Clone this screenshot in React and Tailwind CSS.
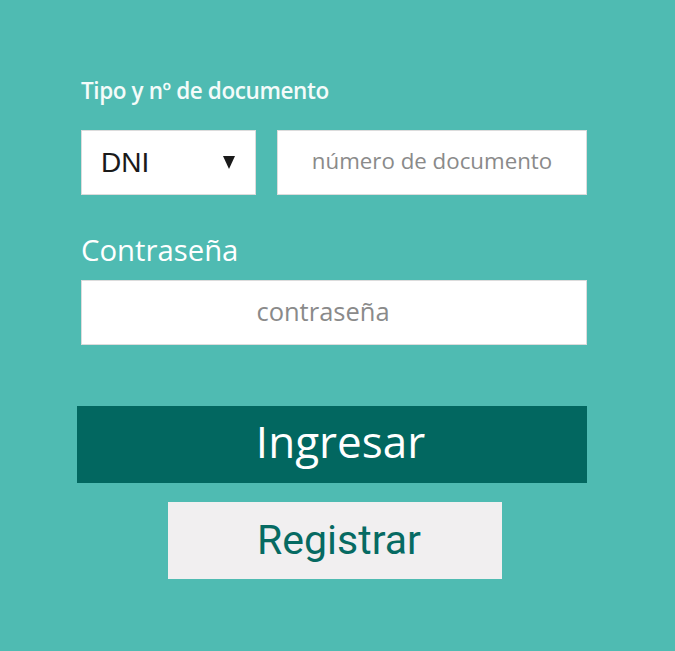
export default function App() {
  return (
    <div className="min-h-[651px] w-full bg-[#4fbbb2] font-['Open_Sans',sans-serif]">
      <div className="ml-[81px] w-[506px] pt-[76px]">
        {/* Tipo y nº de documento */}
        <p className="text-[22.5px] leading-[30px] font-semibold tracking-[-0.4px] text-[#f4fbfa]">
          Tipo y nº de documento
        </p>
        <div className="mt-[24px] flex gap-[21px]">
          <div className="flex h-[65px] w-[175px] items-center justify-between border border-[#dcdcdc] bg-white pl-[19px] pr-[20px]">
            <span className="font-['Liberation_Sans',sans-serif] text-[28px] text-[#1a1a1a]">DNI</span>
            <svg width="12" height="13" viewBox="0 0 12 13">
              <path d="M0 0 H12 L6 13 Z" fill="#1a1a1a" />
            </svg>
          </div>
          <div className="flex h-[65px] flex-1 items-center justify-center border border-[#dcdcdc] bg-white pb-[4px]">
            <span className="text-[22.3px] text-[#8a8a8a]">número de documento</span>
          </div>
        </div>

        {/* Contraseña */}
        <p className="mt-[35px] text-[29.3px] leading-[40px] text-white">Contraseña</p>
        <div className="mt-[10px] flex h-[65px] items-center justify-center border border-[#dcdcdc] bg-white pr-[22px] pb-[2px]">
          <span className="text-[25.5px] text-[#8a8a8a]">contraseña</span>
        </div>
      </div>

      {/* Botones */}
      <div className="ml-[77px] mt-[61px] flex h-[77px] w-[510px] items-center justify-center bg-[#026760] pb-[7px] pl-[17px]">
        <span className="text-[44px] font-medium leading-none text-white">Ingresar</span>
      </div>
      <div className="ml-[168px] mt-[19px] flex h-[77px] w-[334px] items-center justify-center bg-[#f1eff0] pl-[8px]">
        <span className="font-['Roboto',sans-serif] text-[41px] leading-none text-[#066a62]">Registrar</span>
      </div>
    </div>
  );
}
